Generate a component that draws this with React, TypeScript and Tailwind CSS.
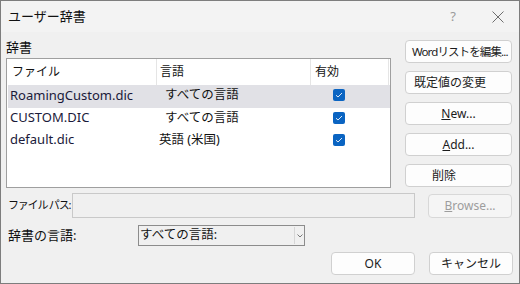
import React from "react";

const font = { fontFamily: '"Noto Sans", "Noto Sans CJK JP", sans-serif' };

function Check() {
  return (
    <div className="w-[12px] h-[12px] rounded-[2px] bg-[#0a64c2] flex items-center justify-center">
      <svg width="8" height="6" viewBox="0 0 8 6">
        <path d="M1 3.2 L3 5 L7 1" fill="none" stroke="#dfeaf7" strokeWidth="1" />
      </svg>
    </div>
  );
}

function Btn({ children, className = "" }: { children: React.ReactNode; className?: string }) {
  return (
    <div
      className={
        "h-[23px] bg-[#fdfdfd] border border-[#d0d0d0] rounded-[4px] flex items-center text-[12px] text-[#1b1b1b] whitespace-nowrap overflow-hidden " +
        className
      }
    >
      {children}
    </div>
  );
}

const rows = [
  { file: "RoamingCustom.dic", lang: "すべての言語", indent: "pl-[8px]", sel: true, h: "h-[23px]" },
  { file: "CUSTOM.DIC", lang: "すべての言語", indent: "pl-[8px]", sel: false, h: "h-[22px]" },
  { file: "default.dic", lang: "英語 (米国)", indent: "pl-[2px]", sel: false, h: "h-[22px]" },
];

export default function App() {
  return (
    <div style={font} className="w-[520px] h-[284px] border border-[#7d7d7d] bg-[#f0f0f0] flex flex-col text-[#111]">
      {/* title bar */}
      <div className="h-[31px] bg-[#f3f3f3] flex items-center shrink-0">
        <div className="pl-[7px] text-[13px] text-[#111]">ユーザー辞書</div>
        <div className="ml-auto flex items-center">
          <div className="text-[13px] text-[#9a9a9a] mr-[36px]">?</div>
          <svg width="12" height="12" viewBox="0 0 12 12" className="mr-[15px]">
            <path d="M0.5 0.5 L11.5 11.5 M11.5 0.5 L0.5 11.5" stroke="#6e6e6e" strokeWidth="1" />
          </svg>
        </div>
      </div>

      {/* main area */}
      <div className="flex">
        <div className="ml-[5px] w-[385px]">
          <div className="h-[26px] pt-[7px] text-[13px] leading-[16px]">辞書</div>
          <div className="h-[130px] border border-[#9f9f9f] bg-white">
            <div className="flex h-[26px] bg-white text-[12px] text-[#111]">
              <div className="w-[150px] border-r border-[#e5e5e5] flex items-center pl-[5px]">ファイル</div>
              <div className="w-[154px] border-r border-[#e5e5e5] flex items-center pl-[3px]">言語</div>
              <div className="w-[78px] border-r border-[#e5e5e5] flex items-center pl-[4px]">有効</div>
            </div>
            {rows.map((r) => (
              <div
                key={r.file}
                className={"flex ml-[1px] " + r.h + " " + (r.sel ? "bg-[#e1e1e6]" : "bg-white")}
              >
                <div className="w-[149px] flex items-center pl-[2px] pb-[2px] text-[13px] text-[#1a1a3a]">{r.file}</div>
                <div className={"w-[154px] flex items-center pb-[2px] text-[12.5px] text-[#111] " + r.indent}>{r.lang}</div>
                <div className="w-[78px] flex items-center pl-[22px] pb-[3px]">
                  <Check />
                </div>
              </div>
            ))}
          </div>
        </div>
        <div className="ml-[14px] mt-[8px] flex flex-col gap-[8px]">
          <Btn className="w-[107px] pl-[6px]">
            <span className="text-[11.5px] tracking-[-0.9px]">Wordリストを編集...</span>
          </Btn>
          <Btn className="w-[107px] pl-[8px]">既定値の変更</Btn>
          <Btn className="w-[107px] justify-center">
            <span>
              <span className="underline">N</span>ew...
            </span>
          </Btn>
          <Btn className="w-[107px] justify-center">
            <span>
              <span className="underline">A</span>dd...
            </span>
          </Btn>
          <Btn className="w-[107px] pl-[26px]">削除</Btn>
        </div>
      </div>

      {/* file path row */}
      <div className="flex items-center mt-[5px]">
        <div className="pl-[7px] w-[71px] text-[11px] whitespace-nowrap tracking-[-1.2px]">ファイル パス:</div>
        <div className="w-[343px] h-[25px] border border-[#c9c9c9] bg-[#f0f0f0]" />
        <div className="ml-[13px] w-[84px] h-[24px] border border-[#d8d8d8] rounded-[4px] bg-[#f5f5f5] flex items-center justify-center text-[12px] text-[#9d9d9d]">
          <span>
            <span className="underline">B</span>rowse...
          </span>
        </div>
      </div>

      {/* language row */}
      <div className="flex items-center mt-[7px]">
        <div className="pl-[7px] w-[137px] text-[13px]">辞書の言語:</div>
        <div className="w-[167px] h-[21px] border border-[#8c8c8c] bg-[#f0f0f0] flex items-center">
          <div className="flex-1 pl-[1px] text-[12.5px]">すべての言語:</div>
          <div className="w-[10px] h-[17px] border-l border-[#d6d6d6] flex items-center justify-center">
            <svg width="6" height="4" viewBox="0 0 6 4">
              <path d="M0.5 0.5 L3 3 L5.5 0.5" fill="none" stroke="#7a7a7a" strokeWidth="1" />
            </svg>
          </div>
        </div>
      </div>

      {/* bottom buttons */}
      <div className="flex justify-end mt-[6px] pr-[6px] gap-[14px]">
        <Btn className="w-[84px] justify-center">OK</Btn>
        <Btn className="w-[84px] justify-center">キャンセル</Btn>
      </div>
    </div>
  );
}
